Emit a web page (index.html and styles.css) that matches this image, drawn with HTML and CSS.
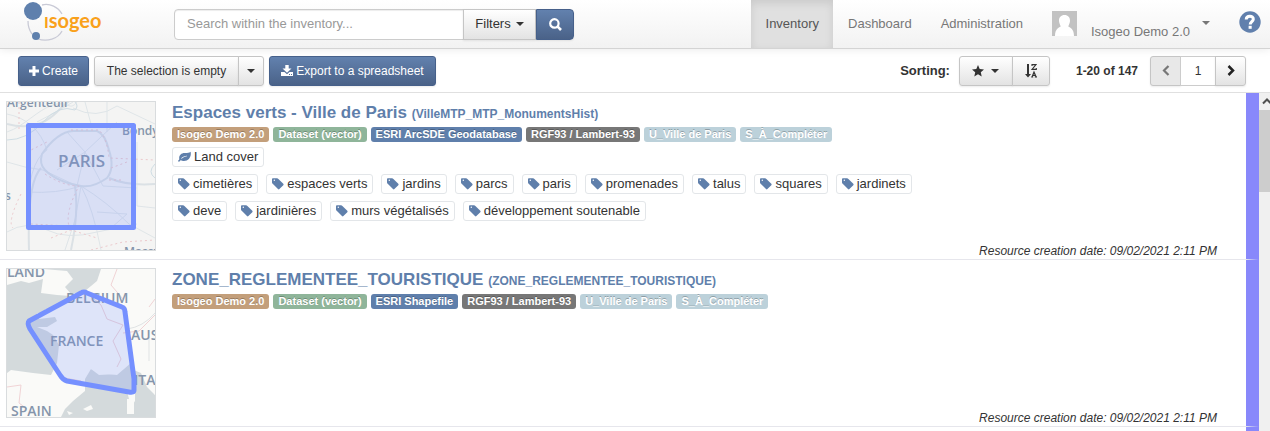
FILE: index.html
```html
<!DOCTYPE html>
<html lang="en">
<head>
<meta charset="utf-8">
<title>Isogeo - Inventory</title>
<link rel="stylesheet" href="styles.css">
</head>
<body>
<svg class="sprite" aria-hidden="true">
  <symbol id="tag" viewBox="0 0 12 12"><path fill-rule="evenodd" d="M0 1.200Q0 .3 .9 .3H5Q5.800 .3 6.400 .9L11.300 5.800Q12 6.500 11.300 7.200L7.400 11.100Q6.700 11.800 6 11.100L.7 5.800Q0 5.100 0 4.400ZM2.300 1.600A.7.7 0 1 0 2.300 3A.7.7 0 1 0 2.300 1.600Z"/></symbol>
  <symbol id="leaf" viewBox="0 0 13 12"><path fill-rule="evenodd" d="M12.600.8C13.700 5.600 10.600 10 6 10C4.600 10 3.600 9.400 2.800 9.200C2.100 9.300 1.700 10.800 1 10.800C.3 10.800-.1 10.100.2 9.600C.5 9 1.300 8.700 1.300 8.200C.6 4.800 2.900 2.200 6.500 2.100C9.300 2.100 10.800 2.200 12.600.8ZM3.600 7.700C5.400 6 7.100 5.400 9 5.200V4.700C6.700 4.700 4.700 5.500 3.100 7.300Z"/></symbol>
</svg>

<header class="navbar">
  <a class="brand" href="#" aria-label="Isogeo">
    <svg width="82" height="44" viewBox="0 0 82 44">
      <path d="M18 5C26 3 34 7 38 14M4 21C4 26 5 30 8 34M14 39C23 42 34 39 38 31" fill="none" stroke="#c9cad6" stroke-width="1.300"/>
      <circle cx="9" cy="11" r="9" fill="#5f80ad"/>
      <circle cx="12" cy="36" r="4" fill="#5f80ad"/>
      <text class="brand-text" x="20" y="28"><tspan class="brand-initial">I</tspan>sogeo</text>
    </svg>
  </a>
  <form class="search">
    <input class="search-input" type="text" placeholder="Search within the inventory..." aria-label="Search within the inventory">
    <button class="btn filters" type="button">Filters <span class="caret"></span></button>
    <button class="btn primary submit" type="button" aria-label="Search">
      <svg width="13" height="13" viewBox="0 0 13 13" fill="none" stroke="#fff"><circle cx="5.400" cy="5.400" r="4.200" stroke-width="2.200"/><path d="M8.400 8.400L12 12" stroke-width="2.600"/></svg>
    </button>
  </form>
  <nav class="menu">
    <a class="menu-link active" href="#">Inventory</a>
    <a class="menu-link" href="#">Dashboard</a>
    <a class="menu-link" href="#">Administration</a>
  </nav>
  <button class="account" type="button">
    <svg width="25" height="25" viewBox="0 0 25 25"><path fill="#c2c2c2" d="M0 0H25V25H0Z"/><path fill="#fff" d="M12.500 4C16 4 18.200 6.400 18 10C17.800 12.800 16.500 14 16.300 15.500C18.500 17 21.800 17.600 22 25H3C3.200 17.600 6.500 17 8.700 15.500C8.500 14 7.200 12.800 7 10C6.800 6.400 9 4 12.500 4Z"/></svg>
    <span class="account-name">Isogeo Demo 2.0</span>
    <span class="caret"></span>
  </button>
  <a class="help" href="#" aria-label="Help">
    <svg width="22" height="22" viewBox="0 0 22 22"><circle cx="11" cy="11" r="10.700" fill="#6180ad"/><path d="M7.200 8.500C7.400 4.300 14.500 4.400 14.300 8.100C14.200 10.500 11.200 10.700 11.200 13.500" fill="none" stroke="#fff" stroke-width="3"/><path fill="#fff" d="M9.600 14.800H12.700V17.800H9.600Z"/></svg>
  </a>
</header>

<section class="toolbar">
  <button class="btn primary create" type="button">
    <svg width="10" height="10" viewBox="0 0 10 10"><path fill="#fff" d="M3.500 0H6.500V3.500H10V6.500H6.500V10H3.500V6.500H0V3.500H3.500Z"/></svg>Create</button>
  <div class="group">
    <button class="btn selection" type="button">The selection is empty</button>
    <button class="btn drop" type="button" aria-label="Selection actions"><span class="caret"></span></button>
  </div>
  <button class="btn primary export" type="button">
    <svg width="12" height="11" viewBox="0 0 12 11"><path fill="#fff" fill-rule="evenodd" d="M4.300 0H7.700V3.500H10.500L6 7.800L1.500 3.500H4.300ZM0 7H3.500L6 9.200L8.500 7H12V11H0ZM8 9V10H9V9ZM10 9V10H11V9Z"/></svg>Export to a spreadsheet</button>
  <strong class="sorting">Sorting:</strong>
  <div class="group">
    <button class="btn sort-key" type="button" aria-label="Sort by relevance">
      <svg width="12" height="12" viewBox="0 0 12 12"><path fill="#333" d="M6 0L7.700 4L12 4.400L8.800 7.200L9.700 11.500L6 9.300L2.300 11.500L3.200 7.200L0 4.400L4.300 4Z"/></svg>
      <span class="caret"></span></button>
    <button class="btn sort-order" type="button" aria-label="Sort descending">
      <svg width="12" height="14" viewBox="0 0 12 14"><path fill="#333" d="M2 0H4V10H6L3 13.500L0 10H2Z"/><path fill="none" stroke="#333" stroke-width="1.100" d="M7 2V.6H11L7 5.400H11.300V4M6.200 13H8.200M9.800 13H12M7 13L9 8L11.200 13M7.700 11.400H10.400"/></svg>
    </button>
  </div>
  <strong class="count">1-20 of 147</strong>
  <div class="group">
    <button class="btn page-btn off" type="button" aria-label="Previous page" disabled><svg width="8" height="11" viewBox="0 0 8 11"><path d="M6.500 1L2 5.500L6.500 10" fill="none" stroke="#777" stroke-width="2.200"/></svg></button>
    <input class="page-input" type="text" value="1" aria-label="Page">
    <button class="btn page-btn" type="button" aria-label="Next page"><svg width="8" height="11" viewBox="0 0 8 11"><path d="M1.500 1L6 5.500L1.500 10" fill="none" stroke="#222" stroke-width="2.500"/></svg></button>
  </div>
</section>

<main class="results">
  <div class="list">
    <article class="row">
      <svg class="map" viewBox="0 0 148 148" role="img" aria-label="Extent map: Paris">
        <path fill="#f4f4f3" d="M0 0H148V148H0Z"/>
        <g fill="none" stroke="#dfe5e8">
          <path d="M0 30C18 24 30 8 46 3S62 10 70 0M0 12Q30 18 40 48Q20 60 20 120M30 20Q50 10 66 0M66 6Q90 18 110 4L148 22M78 0L84 22M100 0V30M0 60Q18 66 36 68L70 84L78 50L110 20M60 30L78 50L50 68M78 50L96 84L130 86M20 90Q50 92 74 84L68 118L58 148M74 84Q86 106 94 148M74 84Q100 100 122 122L148 136M130 40V104L148 106M90 110L120 112L104 126M0 130Q20 118 40 128T90 130L130 122"/>
          <path stroke="#d9e0e4" stroke-width="2" d="M35 52Q50 30 66 29H90Q98 32 102 48Q108 66 100 76Q86 86 74 84Q50 80 38 68Q32 62 35 52Z"/>
          <path stroke="#dbe1e5" stroke-width="2" d="M34 66Q20 80 22 148M102 76Q120 84 148 82M68 84Q72 110 64 148M0 22Q30 30 50 10T70 0"/>
          <path stroke="#cfdde4" d="M0 38Q20 38 36 20T68 8Q72 4 68 0M148 62Q140 70 148 76"/>
          <path stroke="#ecc9cc" stroke-dasharray="2 3" d="M12 0V28M20 50L40 40M64 28H92Q100 36 102 56L148 58M38 72Q56 84 72 84Q58 110 62 124L24 122M14 92Q0 120 6 126M104 66L120 60M102 78H114M44 136L64 128L90 136M84 148L116 140L148 138"/>
        </g>
        <g class="map-label small"><text x="0" y="5">Argenteuil</text><text x="115" y="33">Bondy</text><text x="-2" y="98">s</text><text x="117" y="154">Massy</text></g>
        <text class="map-label" x="51" y="65">PARIS</text>
        <path d="M21.500 23.500H126.500V125.500H21.500Z" fill="#6f8bff" fill-opacity=".2" stroke="#7590ff" stroke-width="5" stroke-linejoin="round"/>
      </svg>
      <div class="details">
        <h2 class="title"><a href="#">Espaces verts - Ville de Paris</a> <small>(VilleMTP_MTP_MonumentsHist)</small></h2>
        <div class="badges">
          <span class="badge owner">Isogeo Demo 2.0</span><span class="badge kind">Dataset (vector)</span><span class="badge format">ESRI ArcSDE Geodatabase</span><span class="badge srs">RGF93 / Lambert-93</span><span class="badge share">U_Ville de Paris</span><span class="badge share">S_À_Compléter</span>
        </div>
        <div class="tags">
          <a class="tag" href="#"><svg width="13" height="12"><use href="#leaf"/></svg>Land cover</a>
        </div>
        <div class="tags keywords">
          <a class="tag" href="#"><svg width="12" height="12"><use href="#tag"/></svg>cimetières</a>
          <a class="tag" href="#"><svg width="12" height="12"><use href="#tag"/></svg>espaces verts</a>
          <a class="tag" href="#"><svg width="12" height="12"><use href="#tag"/></svg>jardins</a>
          <a class="tag" href="#"><svg width="12" height="12"><use href="#tag"/></svg>parcs</a>
          <a class="tag" href="#"><svg width="12" height="12"><use href="#tag"/></svg>paris</a>
          <a class="tag" href="#"><svg width="12" height="12"><use href="#tag"/></svg>promenades</a>
          <a class="tag" href="#"><svg width="12" height="12"><use href="#tag"/></svg>talus</a>
          <a class="tag" href="#"><svg width="12" height="12"><use href="#tag"/></svg>squares</a>
          <a class="tag" href="#"><svg width="12" height="12"><use href="#tag"/></svg>jardinets</a>
          <a class="tag" href="#"><svg width="12" height="12"><use href="#tag"/></svg>deve</a>
          <a class="tag" href="#"><svg width="12" height="12"><use href="#tag"/></svg>jardinières</a>
          <a class="tag" href="#"><svg width="12" height="12"><use href="#tag"/></svg>murs végétalisés</a>
          <a class="tag" href="#"><svg width="12" height="12"><use href="#tag"/></svg>développement soutenable</a>
        </div>
        <p class="date">Resource creation date: 09/02/2021 2:11 PM</p>
      </div>
    </article>

    <article class="row">
      <svg class="map" viewBox="0 0 148 148" role="img" aria-label="Extent map: France">
        <path fill="#fafaf8" d="M0 0H148V148H0Z"/>
        <path fill="#d4dadc" d="M0 16L14 12L22 14L36 10L34 24L50 26L64 27L54 36L46 40L38 40V44H30L32 50L48 48L50 52L40 58L30 58L40 62L46 66L52 76L50 94L44 106L26 104L4 101L0 104ZM36 0H94L90 12L78 22L64 25L58 18L66 10L60 2ZM148 126L138 106L130 96L124 94L110 106L92 104L84 100L78 110V122L66 132L58 140L54 148H148Z"/>
        <path fill="#fafaf8" d="M76 140L84 136L86 140L80 142ZM60 142L66 144L62 146ZM120 122L128 124V132L124 138ZM120 130H127V145H120ZM124 100L134 104L140 118L148 126V92H124ZM74 110Q70 116 72 122L62 130L56 142L50 148H32V106L44 108ZM92 106L84 100L92 98L110 105Z"/>
        <g fill="none" stroke="#f0d3d5"><path d="M80 24L94 36L100 50L116 56L106 72L114 90L110 98M110 0L104 16L116 30M0 118L14 116L12 134L20 140M52 108L74 112M116 64L132 62L148 46M148 30L142 38"/><path stroke="#e0e3e4" d="M120 60Q136 58 148 44M142 68V92"/></g>
        <g class="map-label medium"><text x="0" y="8">LAND</text><text x="59" y="34">BELGIUM</text><text x="43" y="77">FRANCE</text><text x="124" y="71">AUS</text><text x="127" y="116">ITA</text><text x="4" y="147">SPAIN</text></g>
        <path d="M22 52L74 24Q77 22 80 24L115 38Q118 39 118 43L127 110V121Q127 124 122 123L60 112Q56 111 53 106L23 60Q20 54 22 52Z" fill="#6f8bff" fill-opacity=".2" stroke="#7590ff" stroke-width="5" stroke-linejoin="round"/>
      </svg>
      <div class="details">
        <h2 class="title"><a href="#">ZONE_REGLEMENTEE_TOURISTIQUE</a> <small>(ZONE_REGLEMENTEE_TOURISTIQUE)</small></h2>
        <div class="badges">
          <span class="badge owner">Isogeo Demo 2.0</span><span class="badge kind">Dataset (vector)</span><span class="badge format">ESRI Shapefile</span><span class="badge srs">RGF93 / Lambert-93</span><span class="badge share">U_Ville de Paris</span><span class="badge share">S_À_Compléter</span>
        </div>
        <p class="date">Resource creation date: 09/02/2021 2:11 PM</p>
      </div>
    </article>
    <div class="rest"></div>
  </div>
  <div class="scrollbar" aria-hidden="true">
    <svg width="11" height="17" viewBox="0 0 11 17"><path d="M4 10.500L8 6.500L12 10.500" fill="none" stroke="#505050" stroke-width="2"/></svg>
    <div class="thumb"></div>
  </div>
</main>
</body>
</html>
```

FILE: styles.css
```css
* { box-sizing: border-box; }

body {
  margin: 0;
  height: 100vh;
  display: flex;
  flex-direction: column;
  overflow: hidden;
  background: #fff;
  color: #333;
  font: 13px/18px "Liberation Sans", Arial, sans-serif;
}

a { color: inherit; text-decoration: none; }
button, input { font: inherit; color: inherit; margin: 0; }
.sprite { display: none; }

/* Top bar */
.navbar {
  flex: none;
  display: flex;
  height: 49px;
  padding: 0 8px 0 24px;
  border-bottom: 1px solid #d4d4d4;
  background: linear-gradient(#fff, #f2f2f2);
  box-shadow: 0 1px 8px rgba(0, 0, 0, .08);
  color: #777;
}
.brand { width: 150px; }
.brand svg { display: block; }
.brand-text { font: 700 20px Lato, sans-serif; fill: #f9a11b; }
.brand-initial { font-size: 16px; }

.search { display: flex; align-self: center; height: 31px; width: 400px; }
.search-input {
  flex: 1;
  min-width: 0;
  padding: 0 12px;
  border: 1px solid #ccc;
  border-radius: 4px 0 0 4px;
  background: #fff;
  box-shadow: inset 0 1px 1px rgba(0, 0, 0, .075);
}
.search-input::placeholder { color: #999; opacity: 1; }

.btn {
  display: flex;
  align-items: center;
  justify-content: center;
  padding: 0 10px;
  border: 1px solid #c5c5c5;
  border-radius: 3px;
  background: linear-gradient(#fff, #e3e3e3);
  box-shadow: 0 1px 2px rgba(0, 0, 0, .08);
  color: #333;
  white-space: nowrap;
}
.btn.primary {
  border-color: #46608a;
  background: linear-gradient(#6281ae, #4a6288);
  color: #fff;
}
.caret {
  border: 4px solid transparent;
  border-top-color: currentColor;
  border-bottom: 0;
}
.filters { width: 73px; gap: 5px; margin-left: -1px; border-radius: 0; }
.submit { width: 38px; border-radius: 0 4px 4px 0; }

.menu { display: flex; margin-left: auto; }
.menu-link { padding: 15px 14px 0 15px; }
.menu-link.active {
  background: #e0e0e0;
  box-shadow: inset 0 3px 8px rgba(0, 0, 0, .1);
  color: #555;
}
.account {
  flex: none;
  display: flex;
  align-items: center;
  gap: 14px;
  width: 188px;
  padding: 0 0 2px 15px;
  border: 0;
  background: none;
}
.account .caret { margin-left: -2px; }
.account-name { padding-top: 17px; }
.help { display: flex; align-items: center; width: 37px; padding: 0 0 4px 14px; }

/* Action bar */
.toolbar {
  flex: none;
  display: flex;
  align-items: center;
  height: 44px;
  padding: 0 24px 0 18px;
  border-bottom: 1px solid #e0e0e0;
  font-size: 12px;
}
.toolbar .btn { height: 30px; }
.create { width: 71px; gap: 3px; margin-right: 5px; }
.export { width: 167px; gap: 3px; margin-left: 5px; }
.group { display: flex; }
.group > :first-child { border-radius: 3px 0 0 3px; }
.group > :last-child { border-radius: 0 3px 3px 0; }
.group > * + * { margin-left: -1px; }
.selection { width: 145px; }
.drop { width: 26px; }
.sorting { margin: 0 9px 0 auto; font-size: 13px; }
.sort-key { width: 54px; gap: 7px; }
.sort-order { width: 38px; }
.count { margin: 0 12px 0 26px; }
.page-btn { width: 31px; }
.page-btn.off { background: #e8e8e8; }
.page-input {
  width: 36px;
  padding: 0;
  border: 1px solid #ccc;
  text-align: center;
}

/* Result list */
.results { flex: 1; min-height: 0; display: flex; }
.list { flex: 1; min-width: 0; display: flex; flex-direction: column; }
.row {
  flex: none;
  display: flex;
  gap: 16px;
  padding: 8px 29px 0 6px;
  border-right: 13px solid #8888fb;
  border-bottom: 1px solid #e6e6ec;
}
.rest { flex: 1; border-right: 13px solid #8888fb; }
.map {
  flex: none;
  width: 150px;
  height: 150px;
  margin-bottom: 8px;
  border: 1px solid #d9dcde;
}
.map-label { font: 600 17px "Open Sans", sans-serif; fill: #8595ab; }
.map-label.medium { font-size: 14px; }
.map-label.small { font-size: 12px; }

.details { flex: 1; min-width: 0; display: flex; flex-direction: column; align-items: flex-start; }
.title { margin: 0 0 1px; color: #5f7fab; font-size: 17px; line-height: 24px; }
.title small { font-size: 12px; }
.badges { display: flex; flex-wrap: wrap; gap: 4px; }
.badge {
  padding: 0 5px;
  border-radius: 3px;
  color: #fff;
  font-size: 11px;
  font-weight: 700;
  line-height: 15px;
  text-shadow: 0 -1px 0 rgba(0, 0, 0, .25);
}
.owner { background: #c39f7b; }
.kind { background: #8fb59a; }
.format { background: #5f7fab; }
.srs { background: #777; }
.share { background: #bcd1da; }

.tags { display: flex; flex-wrap: wrap; gap: 7px 8px; margin-top: 5px; max-width: 750px; }
.keywords { margin-top: 7px; }
.tag {
  display: flex;
  align-items: center;
  gap: 3px;
  height: 20px;
  padding: 0 5px;
  border: 1px solid #e3e6e9;
  border-radius: 3px;
}
.tag svg { fill: #5f7fab; }
.date { margin: auto 0 0; align-self: flex-end; font-size: 12px; line-height: 16px; font-style: italic; }

.scrollbar { width: 11px; background: #f0f0f0; overflow: hidden; }
.scrollbar svg { display: block; }
.thumb { height: 82px; background: #cdcdcd; }
```
